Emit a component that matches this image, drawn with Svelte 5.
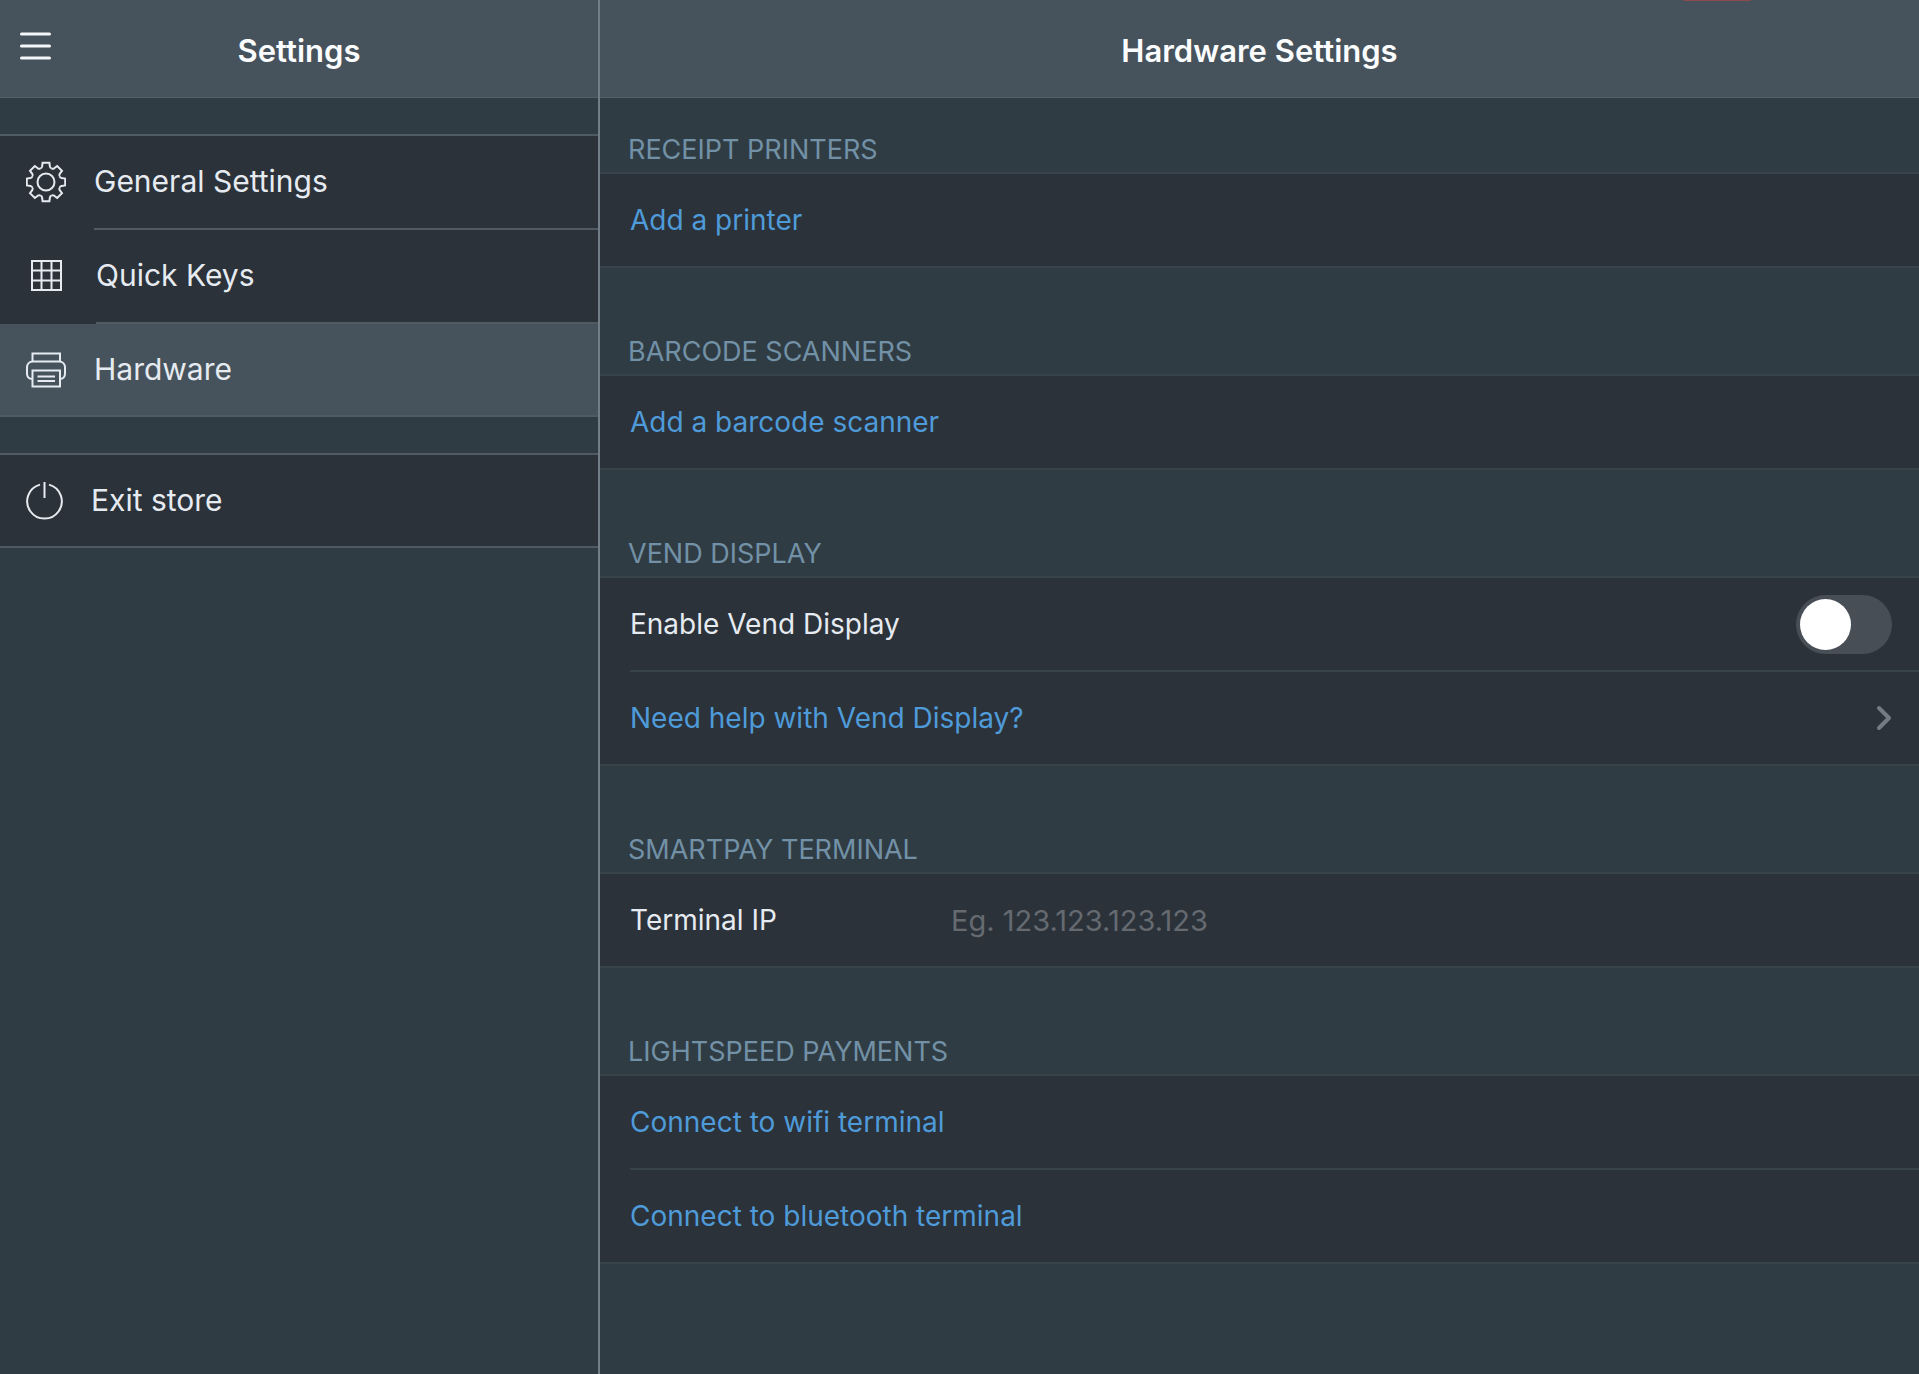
<script>
    let display_enabled = false;
    let terminal_ip = '';
    let active = 'hardware';

    const menu = [
        { id: 'general', title: 'General Settings' },
        { id: 'keys', title: 'Quick Keys' },
        { id: 'hardware', title: 'Hardware' }
    ];

    // one gear tooth is drawn per angle
    const teeth = [0, 45, 90, 135, 180, 225, 270, 315];
</script>

<svelte:head>
    <title>Hardware Settings</title>
</svelte:head>

<div class="app">
    <aside class="sidebar">
        <header class="bar">
            <button class="menu-btn" aria-label="Menu">
                <svg width="31" height="28" viewBox="0 0 31 28" stroke="currentColor" stroke-width="3" stroke-linecap="round">
                    <path d="M1.5 2h28M1.5 14h28M1.5 26h28" />
                </svg>
            </button>
            <h2>Settings</h2>
        </header>

        <nav>
            <div class="group">
                {#each menu as item}
                    <a href="#{item.id}" class="nav-row" class:active={active == item.id} on:click={() => active = item.id}>
                        {#if item.id == 'general'}
                            <svg width="40" height="42" viewBox="-20 -21 40 42">
                                {#each teeth as angle}
                                    <path transform="rotate({angle})" d="M-5.7 -13.8C-4.6 -13.8 -4.100 -14.600 -3.900 -15.500L-3.400 -19.200H3.400L3.900 -15.500C4.100 -14.600 4.600 -13.800 5.700 -13.800" />
                                {/each}
                                <circle r="8.5" />
                            </svg>
                        {:else if item.id == 'keys'}
                            <svg width="42" height="42" viewBox="0 0 42 42">
                                <path d="M6 6h29v29H6zM15.5 6v29M25.5 6v29M6 15.5h29M6 25.5h29" />
                            </svg>
                        {:else}
                            <svg width="40" height="42" viewBox="0 0 40 42">
                                <path d="M6.5 12.5V4.5h27.5v8" />
                                <path d="M6.5 30C3 30 1 28 1 24.5V18.5C1 15 3.5 12.5 7 12.5h26c3.5 0 6 2.5 6 6v6c0 3.5-2 5.5-5.500 5.500" />
                                <path d="M6.5 21.5h27.5V37.5H6.5zM11.5 27.5h17.5M11.5 32h17.5" />
                            </svg>
                        {/if}
                        <span class="nav-title">{item.title}</span>
                    </a>
                {/each}
            </div>

            <div class="group">
                <a href="#exit" class="nav-row">
                    <svg width="37" height="42" viewBox="0 0 37 42">
                        <path d="M14 4.600A17.300 17.300 0 1 0 23 4.600M18.500 2v16" />
                    </svg>
                    <span class="nav-title">Exit store</span>
                </a>
            </div>
        </nav>
    </aside>

    <main class="content">
        <header class="bar">
            <h1>Hardware Settings</h1>
            <span class="record"></span>
        </header>

        <section>
            <h3>RECEIPT PRINTERS</h3>
            <div class="list">
                <button class="row link">Add a printer</button>
            </div>
        </section>

        <section>
            <h3>BARCODE SCANNERS</h3>
            <div class="list">
                <button class="row link">Add a barcode scanner</button>
            </div>
        </section>

        <section>
            <h3>VEND DISPLAY</h3>
            <div class="list">
                <label class="row">
                    <span>Enable Vend Display</span>
                    <input class="toggle" type="checkbox" role="switch" bind:checked={display_enabled}>
                </label>
                <a href="#help" class="row link">
                    <span>Need help with Vend Display?</span>
                    <svg class="chevron" width="16" height="26" viewBox="0 0 16 26">
                        <path d="M3 3l10 10-10 10" />
                    </svg>
                </a>
            </div>
        </section>

        <section>
            <h3>SMARTPAY TERMINAL</h3>
            <div class="list">
                <div class="row">
                    <label class="field-label" for="terminal-ip">Terminal IP</label>
                    <input id="terminal-ip" class="field" type="text" placeholder="Eg. 123.123.123.123" bind:value={terminal_ip}>
                </div>
            </div>
        </section>

        <section>
            <h3>LIGHTSPEED PAYMENTS</h3>
            <div class="list">
                <button class="row link">Connect to wifi terminal</button>
                <button class="row link">Connect to bluetooth terminal</button>
            </div>
        </section>
    </main>
</div>

<style>
    :global(body){
        background: #303c44;
    }
    .app{
        display: grid;
        grid-template-columns: 600px 1fr;
        min-height: 100vh;
        font-family: Inter, sans-serif;
        font-size: 28px;
        line-height: 36px;
        color: #e6ebf1;
        background: #303c44;
    }
    .sidebar{
        border-right: 2px solid #717e87;
    }
    .bar{
        display: grid;
        grid-template-columns: 1fr auto 1fr;
        align-items: center;
        position: relative;
        height: 97px;
        border-bottom: 1px solid #535f68;
        background: #47535c;
    }
    .bar h1, .bar h2{
        grid-column: 2;
        margin: 0;
        padding-top: 4px;
        font-size: 31px;
        font-weight: 600;
        color: #fbfcfd;
    }
    .menu-btn{
        justify-self: start;
        display: flex;
        padding: 0 20px 6px;
        border: 0;
        background: none;
        color: #f4f7f9;
        cursor: pointer;
    }
    .record{
        position: absolute;
        top: 0;
        right: 168px;
        width: 68px;
        height: 1px;
        border-radius: 0 0 4px 4px;
        background: #8d4a4d;
    }
    .group{
        margin-top: 36px;
        border: solid #4f5a63;
        border-width: 2px 0;
        background: #2b323a;
    }
    .nav-row{
        display: flex;
        gap: 28px;
        height: 94px;
        padding-left: 26px;
        font-size: 30px;
        color: inherit;
        text-decoration: none;
    }
    .nav-row:last-child{
        height: 91px;
    }
    .nav-row.active{
        background: #47535c;
    }
    .nav-row svg{
        flex: none;
        margin-top: 25px;
        fill: none;
        stroke: #e6ebf1;
        stroke-width: 2;
    }
    .nav-title{
        flex: 1;
        line-height: 90px;
        border-bottom: 2px solid #4f5a63;
    }
    .nav-row:last-child .nav-title{
        border-bottom: 0;
    }
    section h3{
        height: 38px;
        margin: 0;
        padding: 68px 28px 0;
        font-size: 27px;
        font-weight: 400;
        line-height: 32px;
        color: #7291a6;
    }
    section:first-of-type h3{
        padding-top: 36px;
    }
    .list{
        border: solid #38424a;
        border-width: 2px 0;
        background: #2b323a;
    }
    .row{
        display: flex;
        align-items: center;
        position: relative;
        box-sizing: border-box;
        width: 100%;
        height: 92px;
        padding: 0 27px 0 30px;
        border: 0;
        background: none;
        font: inherit;
        text-align: left;
        color: inherit;
        text-decoration: none;
    }
    .row:not(:last-child){
        height: 94px;
        padding-bottom: 2px;
    }
    .row:not(:last-child)::after{
        content: '';
        position: absolute;
        left: 30px;
        right: 0;
        bottom: 0;
        height: 2px;
        background: #38424a;
    }
    .link{
        color: #4f9bd9;
        cursor: pointer;
    }
    .toggle{
        appearance: none;
        flex: none;
        width: 96px;
        height: 59px;
        margin: 0 0 0 auto;
        padding: 4px;
        border-radius: 30px;
        background: #484e56;
        cursor: pointer;
    }
    .toggle::before{
        content: '';
        display: block;
        width: 51px;
        height: 51px;
        border-radius: 50%;
        background: #fff;
    }
    .toggle:checked{
        padding-left: 41px;
        background: #41af4b;
    }
    .chevron{
        margin-left: auto;
        fill: none;
        stroke: #757b82;
        stroke-width: 4;
        stroke-linecap: round;
        stroke-linejoin: round;
    }
    .field-label{
        width: 321px;
    }
    .field{
        flex: 1;
        height: 60px;
        padding: 0;
        border: 0;
        outline: 0;
        background: none;
        font: inherit;
        font-size: 29px;
        color: inherit;
    }
    .field::placeholder{
        color: #656a71;
        opacity: 1;
    }
</style>
